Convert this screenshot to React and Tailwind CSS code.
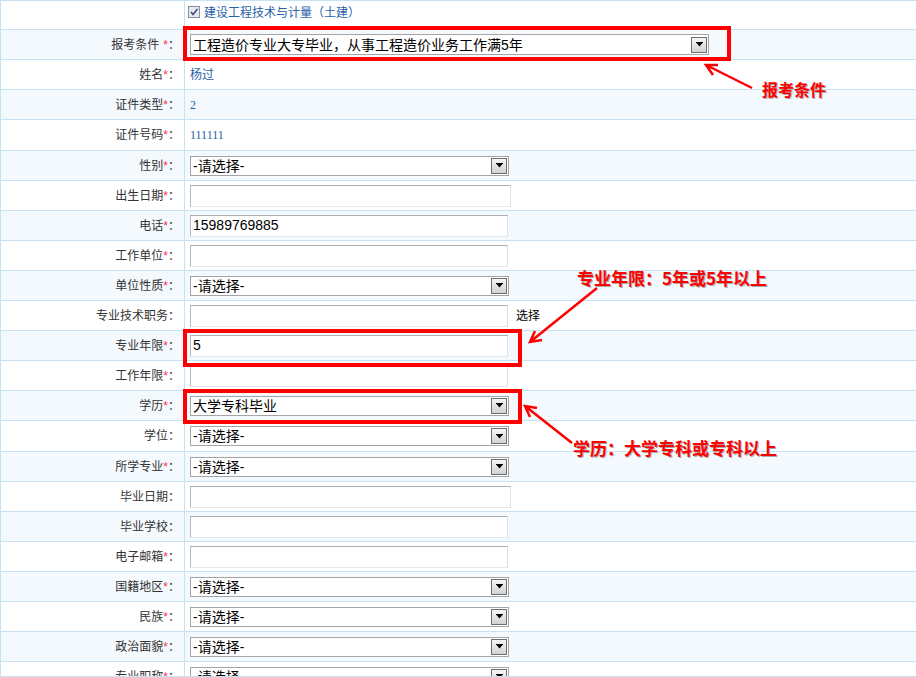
const rows = [
  { label: '报考条件', star: true, gap: true, kind: 'select', w: 'w-[519px]', tall: true, value: '工程造价专业大专毕业，从事工程造价业务工作满5年' },
  { label: '姓名', star: true, kind: 'text', value: '杨过' },
  { label: '证件类型', star: true, kind: 'num', value: '2' },
  { label: '证件号码', star: true, kind: 'num', value: '111111', h: 'h-[31px]' },
  { label: '性别', star: true, kind: 'select', value: '-请选择-' },
  { label: '出生日期', star: true, kind: 'input', w: 'w-[321px]' },
  { label: '电话', star: true, kind: 'input', value: '15989769885' },
  { label: '工作单位', star: true, kind: 'input' },
  { label: '单位性质', star: true, kind: 'select', value: '-请选择-' },
  { label: '专业技术职务', kind: 'input', extra: '选择' },
  { label: '专业年限', star: true, kind: 'input', value: '5' },
  { label: '工作年限', star: true, kind: 'input' },
  { label: '学历', star: true, kind: 'select', value: '大学专科毕业' },
  { label: '学位', kind: 'select', value: '-请选择-', h: 'h-[31px]' },
  { label: '所学专业', star: true, kind: 'select', value: '-请选择-' },
  { label: '毕业日期', kind: 'input', w: 'w-[321px]' },
  { label: '毕业学校', kind: 'input' },
  { label: '电子邮箱', star: true, kind: 'input' },
  { label: '国籍地区', star: true, kind: 'select', value: '-请选择-' },
  { label: '民族', star: true, kind: 'select', value: '-请选择-' },
  { label: '政治面貌', star: true, kind: 'select', value: '-请选择-' },
  { label: '专业职称', star: true, kind: 'select', value: '-请选择-' },
];

function Select({ value, w = 'w-[319px]', tall }) {
  return (
    <div className={`flex ${tall ? 'h-[21px]' : 'h-[20px]'} ${w} items-center border border-[#a5a5a5] bg-white`}>
      <span className="flex-1 truncate pl-[2px] text-[14px] leading-none text-black">{value}</span>
      <div className="m-[1px] flex h-[16px] w-[16px] items-center justify-center border border-[#6e6e6e] bg-gradient-to-b from-[#f6f6f6] to-[#d2d2d2]">
        <svg width="7" height="5" viewBox="0 0 7 5">
          <path d="M0 0h7v1H0z M0.5 1h6L3.5 4.5z" fill="#000" />
        </svg>
      </div>
    </div>
  );
}

function Input({ value, w = 'w-[318px]' }) {
  return (
    <div className={`flex h-[22px] ${w} items-center border border-t-[#abadb3] border-l-[#b5b8bf] border-r-[#dbdfe6] border-b-[#e3e9ef] bg-white pl-[2px] text-[14px] text-black`}>
      {value}
    </div>
  );
}

function Field({ row }) {
  if (row.kind === 'select') return <Select value={row.value} w={row.w} tall={row.tall} />;
  if (row.kind === 'input')
    return (
      <div className="flex items-center gap-[8px]">
        <Input value={row.value} w={row.w} />
        {row.extra && <span className="text-[12px] text-black">{row.extra}</span>}
      </div>
    );
  if (row.kind === 'num') return <span className="font-['Liberation_Serif'] text-[12px] text-[#2760a6]">{row.value}</span>;
  return <span className="text-[12px] text-[#2760a6]">{row.value}</span>;
}

export default function App() {
  return (
    <div className="relative h-[677px] w-[916px] overflow-hidden border-b border-[#c6e3f6] bg-white font-['Liberation_Sans','Noto_Sans_CJK_SC',sans-serif]">
      <div className="border-l border-t border-[#c6e3f6]">
        <div className="flex h-[29px] border-b border-[#c6e3f6]">
          <div className="w-[184px] border-r border-[#c6e3f6]" />
          <div className="flex items-start gap-[4px] pl-[3px] pt-[4px]">
            <svg width="12" height="12" viewBox="0 0 12 12" className="mt-[1px]">
              <rect x="0.5" y="0.5" width="11" height="11" fill="#e6e9ee" stroke="#8a8f99" />
              <path d="M3 6l2 2.5L9.5 3" fill="none" stroke="#3c4f78" strokeWidth="1.6" />
            </svg>
            <span className="text-[12px] leading-[16px] text-[#2760a6]">建设工程技术与计量（土建）</span>
          </div>
        </div>
        {rows.map((row, i) => (
          <div
            key={row.label}
            className={`flex ${row.h || 'h-[30px]'} border-b border-[#c6e3f6] ${i % 2 === 0 ? 'bg-[#f4f9fe]' : 'bg-white'}`}
          >
            <div className="flex w-[184px] items-center justify-end border-r border-[#c6e3f6] pr-[4px] text-[12px] text-[#333]">
              <span>{row.label}</span>
              {row.gap && <span className="w-[4px]" />}
              {row.star && <span className="text-[#ff3344]">*</span>}
              <span>：</span>
            </div>
            <div className="flex items-center pl-[5px]">
              <Field row={row} />
            </div>
          </div>
        ))}
      </div>

      <div className="pointer-events-none absolute left-[183px] top-[26px] h-[35px] w-[548px] border-[4px] border-[#ff0000]" />
      <div className="pointer-events-none absolute left-[183px] top-[329px] h-[38px] w-[339px] border-[4px] border-[#ff0000]" />
      <div className="pointer-events-none absolute left-[183px] top-[389px] h-[35px] w-[339px] border-[4px] border-[#ff0000]" />

      <svg className="pointer-events-none absolute left-0 top-0" width="916" height="677" viewBox="0 0 916 677">
        <g fill="none" stroke="#ff0000" strokeWidth="2.5">
          <path d="M752 88L706 65M718 65L706 65L713 75" />
          <path d="M597 288L530 342M535 331L530 342L542 340" />
          <path d="M572 443L525 406M537 408L525 406L530 417" />
        </g>
      </svg>

      <div className="absolute left-[762px] top-[81px] font-['Noto_Sans_CJK_SC',sans-serif] text-[16px] font-bold leading-none text-[#ff0000] [text-shadow:1px_1px_0_#a8a8a8]">
        报考条件
      </div>
      <div className="absolute left-[577px] top-[269px] font-['Noto_Sans_CJK_SC',sans-serif] text-[17px] font-bold leading-none text-[#ff0000] [text-shadow:1px_1px_0_#a8a8a8]">
        专业年限：5年或5年以上
      </div>
      <div className="absolute left-[573px] top-[439px] font-['Noto_Sans_CJK_SC',sans-serif] text-[17px] font-bold leading-none text-[#ff0000] [text-shadow:1px_1px_0_#a8a8a8]">
        学历：大学专科或专科以上
      </div>
    </div>
  );
}
